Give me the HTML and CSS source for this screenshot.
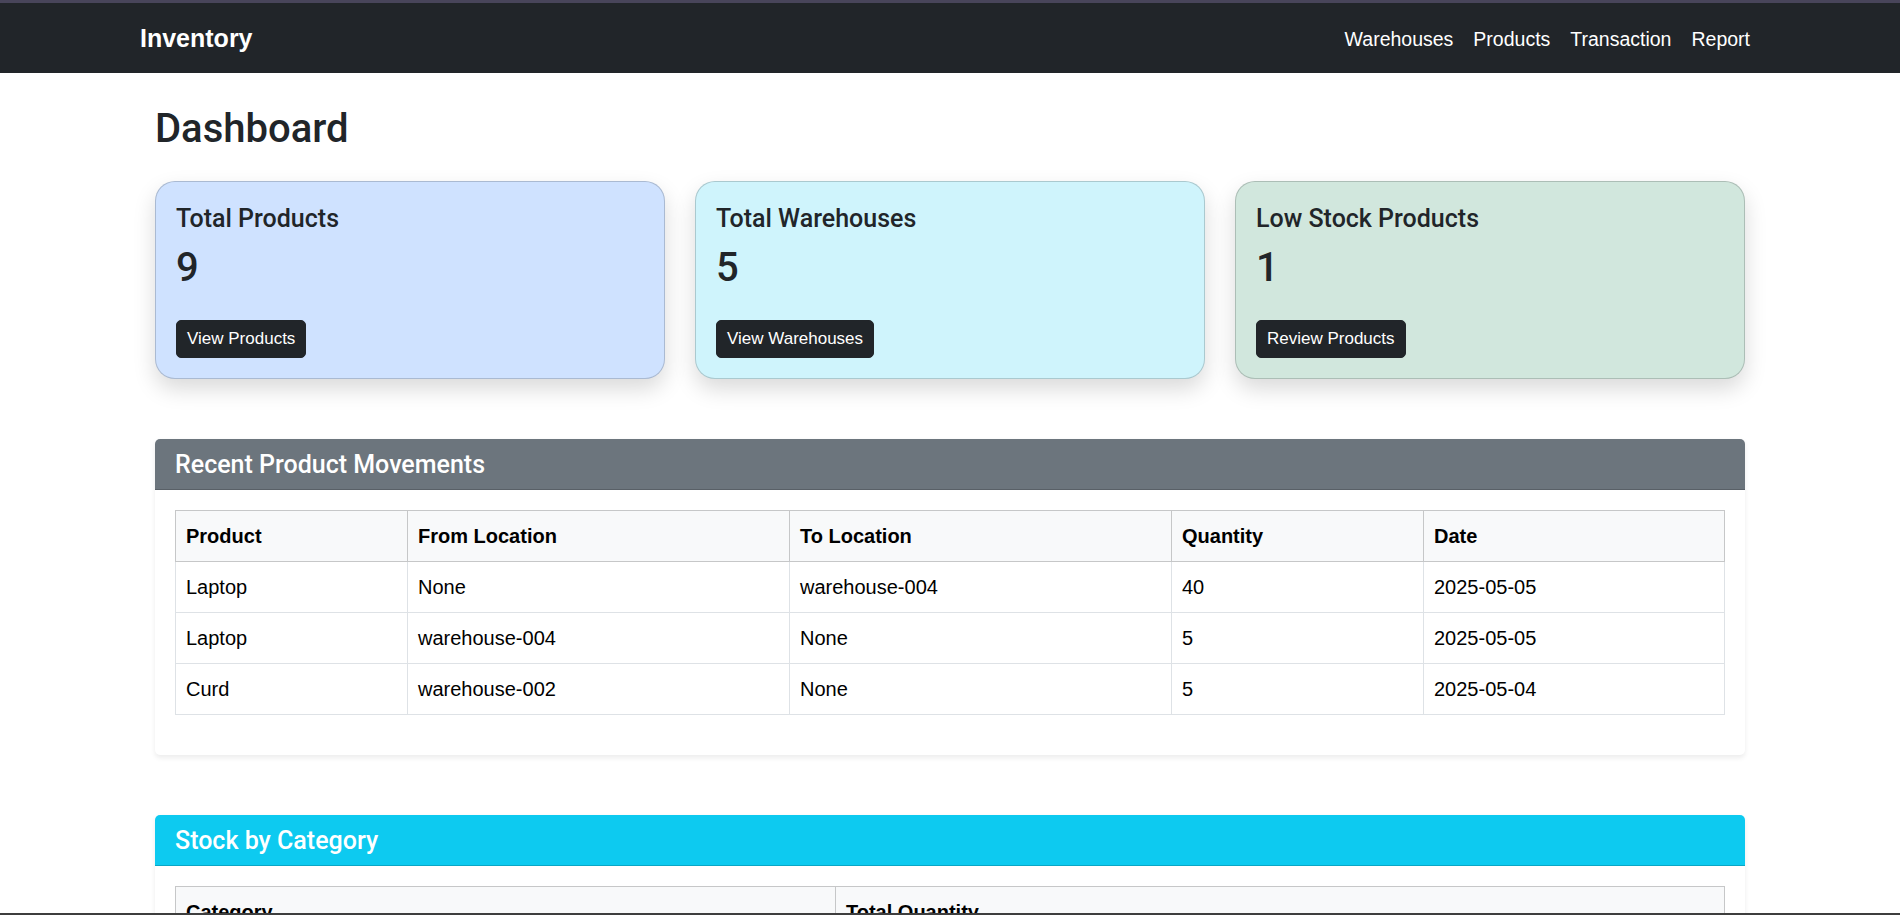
FILE: index.html
```html
<!DOCTYPE html>
<html lang="en">
<head>
<meta charset="utf-8">
<title>Inventory Dashboard</title>
<link rel="stylesheet" href="styles.css">
</head>
<body>
<div class="top-strip"></div>
<nav class="navbar">
  <div class="nav-container">
    <a class="brand" href="#">Inventory</a>
    <div class="nav-links">
      <a href="#">Warehouses</a>
      <a href="#">Products</a>
      <a href="#">Transaction</a>
      <a href="#">Report</a>
    </div>
  </div>
</nav>

<main class="container">
  <h1 class="page-title">Dashboard</h1>

  <div class="stats">
    <div class="stat-card stat-primary">
      <h5 class="stat-title">Total Products</h5>
      <p class="stat-number">9</p>
      <a class="btn" href="#">View Products</a>
    </div>
    <div class="stat-card stat-info">
      <h5 class="stat-title">Total Warehouses</h5>
      <p class="stat-number">5</p>
      <a class="btn" href="#">View Warehouses</a>
    </div>
    <div class="stat-card stat-success">
      <h5 class="stat-title">Low Stock Products</h5>
      <p class="stat-number">1</p>
      <a class="btn" href="#">Review Products</a>
    </div>
  </div>

  <section class="panel">
    <div class="panel-header header-secondary">
      <h5 class="panel-title">Recent Product Movements</h5>
    </div>
    <div class="panel-body">
      <table class="data-table">
        <colgroup>
          <col class="c-product">
          <col class="c-from">
          <col class="c-to">
          <col class="c-qty">
          <col>
        </colgroup>
        <thead>
          <tr><th>Product</th><th>From Location</th><th>To Location</th><th>Quantity</th><th>Date</th></tr>
        </thead>
        <tbody>
          <tr><td>Laptop</td><td>None</td><td>warehouse-004</td><td>40</td><td>2025-05-05</td></tr>
          <tr><td>Laptop</td><td>warehouse-004</td><td>None</td><td>5</td><td>2025-05-05</td></tr>
          <tr><td>Curd</td><td>warehouse-002</td><td>None</td><td>5</td><td>2025-05-04</td></tr>
        </tbody>
      </table>
    </div>
  </section>

  <section class="panel">
    <div class="panel-header header-info">
      <h5 class="panel-title">Stock by Category</h5>
    </div>
    <div class="panel-body">
      <table class="data-table">
        <colgroup>
          <col class="c-category">
          <col>
        </colgroup>
        <thead>
          <tr><th>Category</th><th>Total Quantity</th></tr>
        </thead>
        <tbody>
          <tr><td>Electronics</td><td>35</td></tr>
          <tr><td>Dairy</td><td>15</td></tr>
        </tbody>
      </table>
    </div>
  </section>
</main>
<div class="screen-edge"></div>
</body>
</html>
```

FILE: styles.css
```css
* { box-sizing: border-box; }

html, body {
  margin: 0;
  padding: 0;
}

body {
  font-family: "Liberation Sans", Arial, sans-serif;
  font-size: 20px;
  line-height: 1.5;
  color: #212529;
  background: #ffffff;
}

a { text-decoration: none; }

.top-strip {
  height: 3px;
  background: #48455a;
}

.navbar {
  background: #212529;
  padding: 10px 0;
}

.nav-container {
  width: 1650px;
  margin: 0 auto;
  padding: 0 15px;
  display: flex;
  align-items: center;
  justify-content: space-between;
}

.brand {
  color: #ffffff;
  font-size: 25px;
  font-weight: 700;
  line-height: 37.5px;
  padding: 7.25px 0 5.25px;
}

.nav-links {
  display: flex;
}

.nav-links a {
  color: #ffffff;
  font-size: 19.5px;
  line-height: 30px;
  padding: 11px 10px 9px;
}

.container {
  width: 1650px;
  margin: 0 auto;
  padding: 30px 30px 0;
}

.page-title {
  font-family: Roboto, "Liberation Sans", Arial, sans-serif;
  font-size: 40px;
  font-weight: 500;
  line-height: 48px;
  margin: 0 0 30px;
  padding-top: 2px;
  height: 48px;
  box-sizing: border-box;
}

.stats {
  display: grid;
  grid-template-columns: repeat(3, 1fr);
  gap: 30px;
  margin-bottom: 60px;
}

.stat-card {
  border: 1px solid rgba(0, 0, 0, 0.175);
  border-radius: 20px;
  padding: 20px;
  box-shadow: 0 10px 22px rgba(0, 0, 0, 0.15);
}

.stat-primary { background: #cfe2ff; }
.stat-info { background: #cff4fc; }
.stat-success { background: #d1e7dd; }

.stat-title {
  font-family: Roboto, "Liberation Sans", Arial, sans-serif;
  font-size: 25px;
  font-weight: 500;
  line-height: 1.2;
  margin: 0 0 10px;
  padding-top: 2px;
  height: 30px;
  box-sizing: border-box;
}

.stat-number {
  font-family: Roboto, "Liberation Sans", Arial, sans-serif;
  font-size: 40px;
  font-weight: 500;
  line-height: 1.2;
  margin: 0 0 30px;
  padding-top: 2px;
  height: 48px;
}

.btn {
  display: inline-block;
  background: #212529;
  border: 1px solid #212529;
  color: #ffffff;
  font-size: 17px;
  line-height: 26px;
  padding: 5px 10px;
  border-radius: 5px;
  vertical-align: top;
}

.panel {
  background: #ffffff;
  border-radius: 5px;
  box-shadow: 0 2.5px 5px rgba(0, 0, 0, 0.075);
  margin-bottom: 60px;
  overflow: hidden;
}

.panel-header {
  padding: 10px 20px;
  border-bottom: 1px solid rgba(0, 0, 0, 0.175);
  color: #ffffff;
}

.header-secondary { background: #6c757d; }
.header-info { background: #0dcaf0; }

.panel-title {
  font-family: Roboto, "Liberation Sans", Arial, sans-serif;
  font-size: 25px;
  font-weight: 500;
  line-height: 30px;
  margin: 0;
  padding-top: 1px;
  height: 30px;
}

.panel-body {
  padding: 20px;
}

.data-table {
  width: 100%;
  border-collapse: collapse;
  table-layout: fixed;
  margin-bottom: 20px;
}

.data-table th,
.data-table td {
  text-align: left;
  padding: 10px;
  font-size: 20px;
  line-height: 30px;
  border: 1px solid #dee2e6;
}

.data-table th {
  background: #f8f9fa;
  border-color: #c6c7c8;
  font-weight: 700;
  color: #000000;
}

.data-table td { color: #000000; }

.c-product { width: 232px; }
.c-from { width: 382px; }
.c-to { width: 382px; }
.c-qty { width: 252px; }
.c-category { width: 660px; }

.screen-edge {
  position: fixed;
  left: 0;
  right: 0;
  bottom: 0;
  height: 2px;
  background: #3e3e3e;
}
```
